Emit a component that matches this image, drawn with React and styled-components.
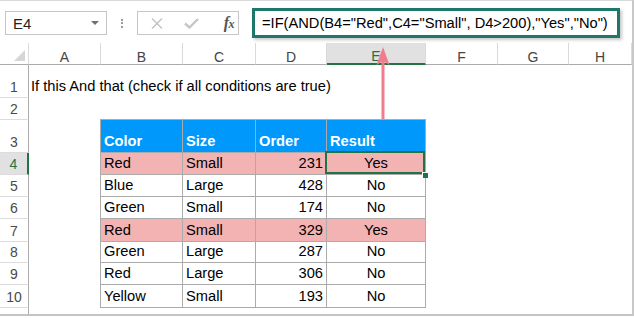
import React from 'react';
import styled, { createGlobalStyle } from 'styled-components';

const GlobalStyle = createGlobalStyle`
  html, body { margin: 0; padding: 0; background: #ffffff; }
  body { font-family: "Liberation Sans", Arial, sans-serif; color: #000; }
`;

const GREEN = '#217346';
const GRID_LINE = '#ababab';

const Window = styled.div`
  position: relative;
  width: 634px;
  height: 316px;
  box-sizing: border-box;
  border-top: 1px solid #d9d9d9;
  border-right: 2px solid #c8c8c8;
  border-bottom: 2px solid #c4c4c4;
  overflow: hidden;
  background: #fff;
`;

/* ---------- formula bar ---------- */

const Bar = styled.div`
  display: flex;
  align-items: flex-start;
  height: 42px;
  box-sizing: border-box;
  padding: 10px 0 0 5px;
`;

const NameBox = styled.div`
  display: flex;
  align-items: center;
  justify-content: space-between;
  width: 102px;
  height: 24px;
  box-sizing: border-box;
  border: 1px solid #c6c6c6;
  padding: 0 7px;
  font-size: 15px;
  color: #222;
`;

const Caret = styled.span`
  width: 0;
  height: 0;
  border-left: 4px solid transparent;
  border-right: 4px solid transparent;
  border-top: 4px solid #707070;
`;

const Grip = styled.div`
  width: 30px;
  height: 24px;
  display: flex;
  flex-direction: column;
  align-items: center;
  justify-content: center;
  gap: 1.5px;
`;

const GripDot = styled.span`
  width: 2px;
  height: 2px;
  background: #9d9d9d;
`;

const ActionBox = styled.div`
  display: grid;
  grid-template-columns: 38px 30px 1fr;
  align-items: center;
  width: 102px;
  height: 24px;
  box-sizing: border-box;
  border: 1px solid #c6c6c6;
`;

const ActionSlot = styled.div`
  display: flex;
  justify-content: ${p => (p.$end ? 'flex-end' : 'center')};
  align-items: center;
  padding-right: ${p => (p.$end ? '4px' : '0')};
`;

const FxLabel = styled.span`
  font-family: "Liberation Serif", "Times New Roman", serif;
  font-style: italic;
  font-weight: bold;
  color: #555;
  font-size: 16px;
  line-height: 16px;
  letter-spacing: -0.5px;
`;

const FxSub = styled.span`
  font-size: 12px;
`;

const FormulaBox = styled.div`
  display: flex;
  align-items: center;
  margin: -3px 0 0 13px;
  width: 368px;
  height: 30px;
  box-sizing: border-box;
  border: 3px solid #1d786c;
  box-shadow: 2px 2px 3px rgba(0, 0, 0, 0.22);
  padding-left: 7px;
  font-size: 14.67px;
  color: #000;
  white-space: nowrap;
`;

/* ---------- sheet ---------- */

const Sheet = styled.div`
  display: grid;
  grid-template-columns: 29px 72px 82px 73px 71px 99px 72px 71px 1fr;
  grid-template-rows: 22px 33px 22px 33px 22px 22px 22px 23px 21px 22px 23px 22px;
`;

const Corner = styled.div`
  grid-row: 1;
  grid-column: 1;
  display: flex;
  justify-content: flex-end;
  align-items: flex-end;
  padding: 0 3px 3px 0;
  border-right: 1px solid #dadada;
  border-bottom: 1px solid ${GRID_LINE};
`;

const ColHeader = styled.div`
  grid-row: 1;
  display: flex;
  justify-content: center;
  align-items: flex-end;
  font-size: 14px;
  line-height: 14px;
  color: ${p => (p.$active ? GREEN : '#444')};
  background: ${p => (p.$active ? '#e1e1e1' : '#fff')};
  border-right: 1px solid #dadada;
  border-bottom: ${p => (p.$active ? `2px solid ${GREEN}` : `1px solid ${GRID_LINE}`)};
`;

const RowHeader = styled.div`
  grid-column: 1;
  grid-row: ${p => p.$row};
  display: flex;
  justify-content: center;
  align-items: flex-end;
  padding-bottom: 2px;
  font-size: 14px;
  line-height: 16px;
  color: ${p => (p.$active ? GREEN : '#4a4a4a')};
  background: ${p => (p.$active ? '#e1e1e1' : '#fff')};
  border-right: ${p => (p.$active ? `2px solid ${GREEN}` : `1px solid ${GRID_LINE}`)};
  border-bottom: 1px solid #dcdcdc;
`;

const TitleCell = styled.div`
  grid-row: 2;
  grid-column: 2 / -1;
  display: flex;
  align-items: flex-end;
  padding: 0 0 3px 2px;
  font-size: 14.67px;
  line-height: 17px;
  white-space: nowrap;
`;

const DataTable = styled.div`
  grid-row: 4 / 12;
  grid-column: 3 / 7;
  display: grid;
  grid-template-columns: 82px 73px 71px 99px;
  grid-template-rows: 33px 22px 22px 22px 23px 21px 22px 23px;
  margin: -1px 0 0 -1px;
  border-top: 1px solid ${GRID_LINE};
  border-left: 1px solid ${GRID_LINE};
`;

const Cell = styled.div`
  position: relative;
  display: flex;
  align-items: flex-end;
  justify-content: ${p => p.$align || 'flex-start'};
  box-sizing: border-box;
  padding: 0 3px 2px 3px;
  font-size: 14.67px;
  line-height: 17px;
  white-space: nowrap;
  border-right: 1px solid ${GRID_LINE};
  border-bottom: 1px solid ${GRID_LINE};
  color: ${p => (p.$head ? '#fff' : '#000')};
  font-weight: ${p => (p.$head ? 'bold' : 'normal')};
  background: ${p => (p.$head ? '#0098fb' : p.$pink ? '#f3b3b3' : '#fff')};
  z-index: ${p => (p.$selected ? 1 : 'auto')};

  ${p =>
    p.$selected &&
    `
    &::after {
      content: '';
      position: absolute;
      top: -2px;
      left: -2px;
      right: 0;
      bottom: 0;
      border: 2px solid ${GREEN};
      pointer-events: none;
    }
    &::before {
      content: '';
      position: absolute;
      right: -3px;
      bottom: -4px;
      width: 5px;
      height: 5px;
      background: ${GREEN};
      border-top: 1px solid #fff;
      border-left: 1px solid #fff;
      z-index: 2;
    }
  `}
`;

const Pointer = styled.svg`
  position: absolute;
  left: 376px;
  top: 44px;
  overflow: visible;
  pointer-events: none;
`;

const COLUMNS = ['A', 'B', 'C', 'D', 'E', 'F', 'G', 'H'];
const ROW_LABELS = ['1', '2', '3', '4', '5', '6', '7', '8', '9', '10', '11'];

const ORDERS = [
  { color: 'Red', size: 'Small', order: 231, result: 'Yes' },
  { color: 'Blue', size: 'Large', order: 428, result: 'No' },
  { color: 'Green', size: 'Small', order: 174, result: 'No' },
  { color: 'Red', size: 'Small', order: 329, result: 'Yes' },
  { color: 'Green', size: 'Large', order: 287, result: 'No' },
  { color: 'Red', size: 'Large', order: 306, result: 'No' },
  { color: 'Yellow', size: 'Small', order: 193, result: 'No' },
];

const ACTIVE_COL = 'E';
const ACTIVE_ROW = '4';

function CancelIcon() {
  return (
    <svg width="12" height="11" viewBox="0 0 12 11">
      <path d="M1 0.5 L11 10.5 M11 0.5 L1 10.5" stroke="#c2c2c2" strokeWidth="1.4" fill="none" />
    </svg>
  );
}

function EnterIcon() {
  return (
    <svg width="15" height="11" viewBox="0 0 15 11">
      <path d="M1 5.5 L5.5 9.5 L14 1" stroke="#c6c6c6" strokeWidth="2.4" fill="none" />
    </svg>
  );
}

function SelectAllMark() {
  return (
    <svg width="11" height="11" viewBox="0 0 11 11">
      <polygon points="11,0 11,11 0,11" fill="#d6d6d6" />
    </svg>
  );
}

export default function App() {
  return (
    <>
      <GlobalStyle />
      <Window>
        <Bar>
          <NameBox>
            <span>E4</span>
            <Caret />
          </NameBox>
          <Grip>
            <GripDot />
            <GripDot />
            <GripDot />
          </Grip>
          <ActionBox>
            <ActionSlot>
              <CancelIcon />
            </ActionSlot>
            <ActionSlot>
              <EnterIcon />
            </ActionSlot>
            <ActionSlot $end>
              <FxLabel>
                f<FxSub>x</FxSub>
              </FxLabel>
            </ActionSlot>
          </ActionBox>
          <FormulaBox>=IF(AND(B4="Red",C4="Small", D4&gt;200),"Yes","No")</FormulaBox>
        </Bar>

        <Sheet>
          <Corner>
            <SelectAllMark />
          </Corner>
          {COLUMNS.map(c => (
            <ColHeader key={c} $active={c === ACTIVE_COL}>
              {c}
            </ColHeader>
          ))}
          {ROW_LABELS.map((r, i) => (
            <RowHeader key={r} $row={i + 2} $active={r === ACTIVE_ROW}>
              {r}
            </RowHeader>
          ))}

          <TitleCell>If this And that (check if all conditions are true)</TitleCell>

          <DataTable>
            <Cell $head>Color</Cell>
            <Cell $head>Size</Cell>
            <Cell $head>Order</Cell>
            <Cell $head>Result</Cell>
            {ORDERS.map((o, i) => {
              const pink = o.result === 'Yes';
              return (
                <React.Fragment key={i}>
                  <Cell $pink={pink}>{o.color}</Cell>
                  <Cell $pink={pink}>{o.size}</Cell>
                  <Cell $pink={pink} $align="flex-end">
                    {o.order}
                  </Cell>
                  <Cell $pink={pink} $align="center" $selected={i === 0}>
                    {o.result}
                  </Cell>
                </React.Fragment>
              );
            })}
          </DataTable>
        </Sheet>

        <Pointer width="14" height="76" viewBox="0 0 14 76">
          <line x1="7" y1="14" x2="7" y2="74" stroke="#ef7d8c" strokeWidth="3" />
          <polygon points="7,2 13.5,20 7,16 0.5,20" fill="#ef7d8c" />
        </Pointer>
      </Window>
    </>
  );
}
